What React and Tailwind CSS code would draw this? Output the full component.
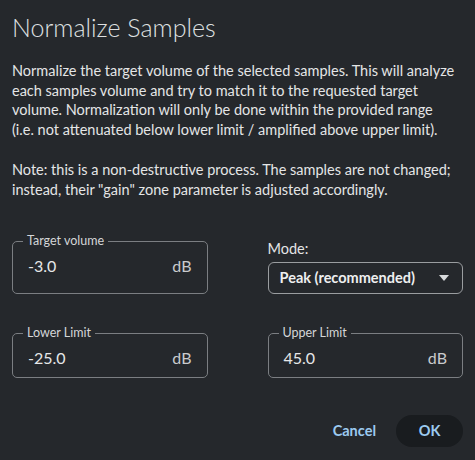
import React from 'react';

const font = { fontFamily: 'Lato, "Noto Sans", sans-serif' };

const intro = [
  'Normalize the target volume of the selected samples. This will analyze',
  'each samples volume and try to match it to the requested target',
  'volume. Normalization will only be done within the provided range',
  '(i.e. not attenuated below lower limit / amplified above upper limit).',
];

const note = [
  'Note: this is a non-destructive process. The samples are not changed;',
  'instead, their "gain" zone parameter is adjusted accordingly.',
];

function Lines({ lines, className }) {
  return (
    <p className={className}>
      {lines.map((l) => (
        <span key={l} className="block whitespace-nowrap">{l}</span>
      ))}
    </p>
  );
}

function UnitField({ label, value }) {
  return (
    <fieldset className="rounded-[5px] border border-[#7b7e82] px-[10px] pb-[9px]">
      <legend className="px-[4px] text-[12.5px] leading-[14px] text-[#d4d6d8]">{label}</legend>
      <div className="flex items-center justify-between px-[5px] pt-[8px] text-[16px] leading-[20px] text-[#e6e7e8]">
        <span>{value}</span>
        <span className="text-[#c9cbcd]">dB</span>
      </div>
    </fieldset>
  );
}

export default function App() {
  return (
    <div className="h-[460px] w-[475px] overflow-hidden bg-[#25282c] px-3 text-[#e2e3e4]" style={font}>
      <h1 className="pt-[11px] text-[25px] font-light leading-[32px] text-[#dfe0e1]">Normalize Samples</h1>

      <div className="mt-[18px] text-[14.5px] leading-[19.7px] text-[#e4e5e6]">
        <Lines lines={intro} />
        <Lines lines={note} className="mt-[20px]" />
      </div>

      <div className="mt-[35px] grid grid-cols-2 gap-x-[60px] gap-y-[32px]">
        <UnitField label="Target volume" value="-3.0" />
        <div className="pt-[6px]">
          <div className="text-[14.5px] leading-[18px] text-[#e4e5e6]">Mode:</div>
          <button className="mt-[4px] flex h-[32px] w-full items-center justify-between rounded-[6px] border border-[#9a9da0] pl-[11px] pr-[13px] text-[14.5px] font-bold text-[#eeeff0]">
            <span>Peak (recommended)</span>
            <svg width="10" height="6" viewBox="0 0 10 6">
              <path d="M0 0h10L5 6z" fill="#d8dadc" />
            </svg>
          </button>
        </div>
        <UnitField label="Lower Limit" value="-25.0" />
        <UnitField label="Upper Limit" value="45.0" />
      </div>

      <div className="mt-[37px] flex items-center justify-end gap-[20px]">
        <button className="text-[14.5px] font-bold text-[#9ccaf0]">Cancel</button>
        <button className="h-[32px] w-[67px] rounded-full bg-[#191c1f] text-[14.5px] font-bold text-[#9ccaf0]">OK</button>
      </div>
    </div>
  );
}
